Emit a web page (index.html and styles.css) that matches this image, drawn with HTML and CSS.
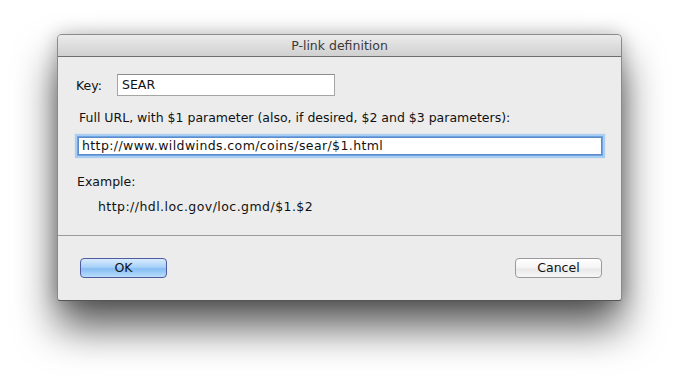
FILE: index.html
```html
<!DOCTYPE html>
<html>
<head>
<meta charset="utf-8">
<link rel="stylesheet" href="styles.css">
</head>
<body>
<div class="window">
  <div class="titlebar">P-link definition</div>
  <div class="content">
    <div class="key-row">
      <span class="label">Key:</span>
      <div class="field key-field">SEAR</div>
    </div>
    <div class="line full-label">Full URL, with $1 parameter (also, if desired, $2 and $3 parameters):</div>
    <div class="field url-field">http://www.wildwinds.com/coins/sear/$1.html</div>
    <div class="line example-label">Example:</div>
    <div class="line example-url">http://hdl.loc.gov/loc.gmd/$1.$2</div>
  </div>
  <div class="footer">
    <div class="btn btn-default">OK</div>
    <div class="btn btn-cancel">Cancel</div>
  </div>
</div>
</body>
</html>
```
FILE: styles.css
```css
html, body {
  margin: 0;
  padding: 0;
  background: #ffffff;
}
body {
  padding: 34px 0 0 57px;
  height: 380px;
  box-sizing: border-box;
  font-family: "DejaVu Sans", "Liberation Sans", sans-serif;
  font-size: 12.5px;
  color: #111;
}
.window {
  width: 565px;
  height: 267px;
  box-sizing: border-box;
  background: #ececec;
  border: 1px solid #8a8a8a;
  border-bottom-color: #555;
  border-radius: 5px 5px 3px 3px;
  box-shadow: 0 26px 42px rgba(0,0,0,0.66), 0 0 18px rgba(0,0,0,0.22);
  display: flex;
  flex-direction: column;
}
.titlebar {
  height: 21px;
  flex: none;
  border-bottom: 1px solid #6e6e6e;
  border-radius: 4px 4px 0 0;
  background: linear-gradient(#ebebeb, #d0d0d0);
  text-align: center;
  line-height: 22px;
  font-size: 12.5px;
  color: #3a3a3a;
}
.content {
  padding: 17px 19px 0 17px;
  height: 161px;
  flex: none;
  border-bottom: 1px solid #9a9a9a;
}
.key-row {
  display: flex;
  align-items: center;
  height: 22px;
}
.label {
  width: 41px;
  padding-left: 1px;
}
.field {
  background: #fff;
  box-sizing: border-box;
  padding-left: 4px;
}
.key-field {
  width: 218px;
  height: 22px;
  line-height: 20px;
  border: 1px solid #a5a5a5;
  border-top-color: #8c8c8c;
}
.line {
  height: 16px;
  line-height: 16px;
}
.full-label {
  margin-top: 14px;
  padding-left: 4px;
}
.url-field {
  margin-top: 11px;
  margin-left: 3px;
  width: 524px;
  height: 18px;
  line-height: 16px;
  border: 1px solid #5b8cc8;
  box-shadow: 0 0 0 1px #6fa3e0, 0 0 1px 3px #a9cdf3;
  padding-left: 3px;
  letter-spacing: 0.4px;
}
.example-label {
  margin-top: 19px;
  padding-left: 2px;
}
.example-url {
  margin-top: 9px;
  padding-left: 23px;
  letter-spacing: 0.45px;
}
.footer {
  display: flex;
  justify-content: space-between;
  padding: 22px 19px 0 22px;
}
.btn {
  width: 87px;
  height: 20px;
  box-sizing: border-box;
  border-radius: 4px;
  text-align: center;
  line-height: 18px;
  font-size: 12.5px;
}
.btn-default {
  border: 1px solid #4f5b9e;
  background: linear-gradient(#d8ebfd 0%, #a8d1f8 45%, #86bdf3 55%, #b8defc 100%);
}
.btn-cancel {
  border: 1px solid #9a9a9a;
  background: linear-gradient(#ffffff 0%, #f4f4f4 50%, #e8e8e8 55%, #f7f7f7 100%);
}
```
